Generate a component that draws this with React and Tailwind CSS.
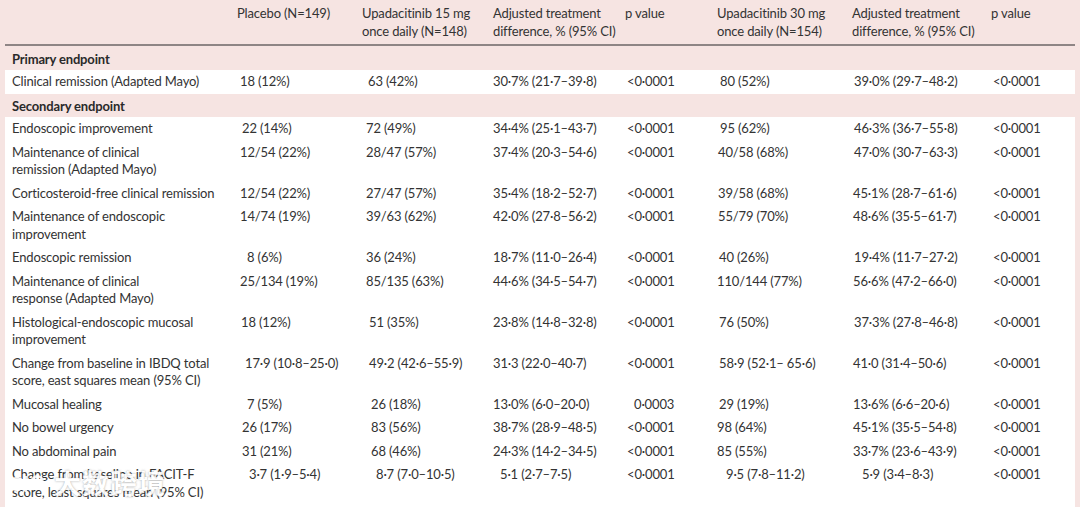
import React from "react";

const COLS = "grid grid-cols-[225px_125px_131px_132px_92px_135px_139px_1fr]";

// each cell: [text, indent class]
const PRIMARY = [
  {
    label: ["Clinical remission (Adapted Mayo)"],
    cells: [
      ["18 (12%)", "pl-[3px]"],
      ["63 (42%)", "pl-[6px]"],
      ["30·7% (21·7–39·8)", ""],
      ["<0·0001", "pl-[2px]"],
      ["80 (52%)", "pl-[3px]"],
      ["39·0% (29·7–48·2)", "pl-[2px]"],
      ["<0·0001", "pl-[2px]"],
    ],
  },
];

const SECONDARY = [
  {
    label: ["Endoscopic improvement"],
    cells: [
      ["22 (14%)", "pl-[5px]"],
      ["72 (49%)", "pl-[4px]"],
      ["34·4% (25·1–43·7)", ""],
      ["<0·0001", "pl-[2px]"],
      ["95 (62%)", "pl-[3px]"],
      ["46·3% (36·7–55·8)", "pl-[2px]"],
      ["<0·0001", "pl-[2px]"],
    ],
  },
  {
    label: ["Maintenance of clinical", "remission (Adapted Mayo)"],
    cells: [
      ["12/54 (22%)", "pl-[3px]"],
      ["28/47 (57%)", "pl-[4px]"],
      ["37·4% (20·3–54·6)", ""],
      ["<0·0001", "pl-[2px]"],
      ["40/58 (68%)", "pl-[1px]"],
      ["47·0% (30·7–63·3)", "pl-[2px]"],
      ["<0·0001", "pl-[2px]"],
    ],
  },
  {
    label: ["Corticosteroid-free clinical remission"],
    cells: [
      ["12/54 (22%)", "pl-[3px]"],
      ["27/47 (57%)", "pl-[4px]"],
      ["35·4% (18·2–52·7)", ""],
      ["<0·0001", "pl-[2px]"],
      ["39/58 (68%)", "pl-[1px]"],
      ["45·1% (28·7–61·6)", "pl-[1px]"],
      ["<0·0001", "pl-[2px]"],
    ],
  },
  {
    label: ["Maintenance of endoscopic", "improvement"],
    cells: [
      ["14/74 (19%)", "pl-[3px]"],
      ["39/63 (62%)", "pl-[4px]"],
      ["42·0% (27·8–56·2)", ""],
      ["<0·0001", "pl-[2px]"],
      ["55/79 (70%)", "pl-[1px]"],
      ["48·6% (35·5–61·7)", "pl-[1px]"],
      ["<0·0001", "pl-[2px]"],
    ],
  },
  {
    label: ["Endoscopic remission"],
    cells: [
      ["8 (6%)", "pl-[10px]"],
      ["36 (24%)", "pl-[4px]"],
      ["18·7% (11·0–26·4)", ""],
      ["<0·0001", "pl-[2px]"],
      ["40 (26%)", "pl-[2px]"],
      ["19·4% (11·7–27·2)", "pl-[2px]"],
      ["<0·0001", "pl-[2px]"],
    ],
  },
  {
    label: ["Maintenance of clinical", "response (Adapted Mayo)"],
    cells: [
      ["25/134 (19%)", "pl-[3px]"],
      ["85/135 (63%)", "pl-[4px]"],
      ["44·6% (34·5–54·7)", ""],
      ["<0·0001", "pl-[2px]"],
      ["110/144 (77%)", ""],
      ["56·6% (47·2–66·0)", "pl-[1px]"],
      ["<0·0001", "pl-[2px]"],
    ],
  },
  {
    label: ["Histological-endoscopic mucosal", "improvement"],
    cells: [
      ["18 (12%)", "pl-[4px]"],
      ["51 (35%)", "pl-[7px]"],
      ["23·8% (14·8–32·8)", ""],
      ["<0·0001", "pl-[2px]"],
      ["76 (50%)", "pl-[2px]"],
      ["37·3% (27·8–46·8)", "pl-[2px]"],
      ["<0·0001", "pl-[2px]"],
    ],
  },
  {
    label: ["Change from baseline in IBDQ total", "score, east squares mean (95% CI)"],
    cells: [
      ["17·9 (10·8–25·0)", "pl-[8px]"],
      ["49·2 (42·6–55·9)", "pl-[7px]"],
      ["31·3 (22·0–40·7)", ""],
      ["<0·0001", "pl-[2px]"],
      ["58·9 (52·1– 65·6)", "pl-[2px]"],
      ["41·0 (31·4–50·6)", "pl-[1px]"],
      ["<0·0001", "pl-[2px]"],
    ],
  },
  {
    label: ["Mucosal healing"],
    cells: [
      ["7 (5%)", "pl-[10px]"],
      ["26 (18%)", "pl-[9px]"],
      ["13·0% (6·0–20·0)", ""],
      ["0·0003", "pl-[9px]"],
      ["29 (19%)", "pl-[2px]"],
      ["13·6% (6·6–20·6)", "pl-[1px]"],
      ["<0·0001", "pl-[2px]"],
    ],
  },
  {
    label: ["No bowel urgency"],
    cells: [
      ["26 (17%)", "pl-[5px]"],
      ["83 (56%)", "pl-[9px]"],
      ["38·7% (28·9–48·5)", ""],
      ["<0·0001", "pl-[2px]"],
      ["98 (64%)", ""],
      ["45·1% (35·5–54·8)", "pl-[1px]"],
      ["<0·0001", "pl-[2px]"],
    ],
  },
  {
    label: ["No abdominal pain"],
    cells: [
      ["31 (21%)", "pl-[5px]"],
      ["68 (46%)", "pl-[9px]"],
      ["24·3% (14·2–34·5)", ""],
      ["<0·0001", "pl-[2px]"],
      ["85 (55%)", ""],
      ["33·7% (23·6–43·9)", "pl-[1px]"],
      ["<0·0001", "pl-[2px]"],
    ],
  },
  {
    label: ["Change from baseline in FACIT-F", "score, least squares mean (95% CI)"],
    cells: [
      ["3·7 (1·9–5·4)", "pl-[12px]"],
      ["8·7 (7·0–10·5)", "pl-[14px]"],
      ["5·1 (2·7–7·5)", "pl-[7px]"],
      ["<0·0001", "pl-[2px]"],
      ["9·5 (7·8–11·2)", "pl-[9px]"],
      ["5·9 (3·4–8·3)", "pl-[10px]"],
      ["<0·0001", "pl-[2px]"],
    ],
  },
];

const HEADERS = [
  ["Placebo (N=149)"],
  ["Upadacitinib 15 mg", "once daily (N=148)"],
  ["Adjusted treatment", "difference, % (95% CI)"],
  ["p value"],
  ["Upadacitinib 30 mg", "once daily (N=154)"],
  ["Adjusted treatment", "difference, % (95% CI)"],
  ["p value"],
];

const Lines = ({ lines }) =>
  lines.map((l, i) => (
    <div key={i} className="whitespace-nowrap">
      {l}
    </div>
  ));

const Row = ({ row }) => (
  <div className={`${COLS} px-[7px] py-[3px]`}>
    <div>
      <Lines lines={row.label} />
    </div>
    {row.cells.map(([text, indent], i) => (
      <div key={i} className={`whitespace-nowrap ${indent}`}>
        {text}
      </div>
    ))}
  </div>
);

const SectionTitle = ({ children }) => (
  <div className="px-[12px] pt-[4px] pb-[2px] font-bold text-[#2a2a2a]">{children}</div>
);

export default function App() {
  return (
    <div className="relative w-[1080px] h-[507px] overflow-hidden bg-[#f6e4e2] font-['Lato',sans-serif] text-[13px] leading-[17.5px] tracking-[-0.15px] text-[#333333]">
      {/* header */}
      <div className={`${COLS} pl-[12px] pt-[5px] pb-[4px]`}>
        <div />
        {HEADERS.map((h, i) => (
          <div key={i}>
            <Lines lines={h} />
          </div>
        ))}
      </div>
      <div className="mx-[5px] h-[1.5px] bg-[#8e8585]" />

      <div className="pt-[1px]">
        <SectionTitle>Primary endpoint</SectionTitle>
        <div className="mx-[5px] bg-white">
          {PRIMARY.map((r, i) => (
            <Row key={i} row={r} />
          ))}
        </div>
        <SectionTitle>Secondary endpoint</SectionTitle>
        <div className="mx-[5px] bg-white pb-[4px]">
          {SECONDARY.map((r, i) => (
            <Row key={i} row={r} />
          ))}
        </div>
      </div>

      {/* watermark */}
      <div className="pointer-events-none absolute left-[8px] top-[468px] flex items-center gap-[6px] opacity-90">
        <svg width="40" height="26" viewBox="0 0 40 26" fill="none" stroke="#ffffff" strokeWidth="2.5">
          <circle cx="9" cy="14" r="6" />
          <path d="M18 6 L18 22 M24 10 C28 4 36 6 34 13 C32 20 24 20 24 14" />
        </svg>
        <span className="font-['Noto_Sans_CJK_SC',sans-serif] text-[27px] leading-[30px] font-bold tracking-[1px] text-white [text-shadow:0_0_2px_rgba(110,110,110,0.7)]">
          大数跨境
        </span>
      </div>
    </div>
  );
}
